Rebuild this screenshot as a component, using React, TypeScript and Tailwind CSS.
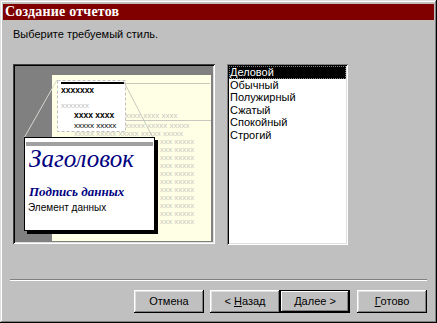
const sans = "font-['Liberation_Sans',Arial,sans-serif]";
const serif = "font-['Liberation_Serif','Times_New_Roman',serif]";

const styles = ["Деловой", "Обычный", "Полужирный", "Сжатый", "Спокойный", "Строгий"];

function Btn({ children, isDefault }: { children: React.ReactNode; isDefault?: boolean }) {
  return (
    <button
      className={
        "h-[23px] w-[70px] bg-[#c0c0c0] text-[11px] text-black flex items-center justify-center " +
        (isDefault
          ? "shadow-[inset_0_0_0_1px_#000,inset_-2px_-2px_#000,inset_2px_2px_#fff,inset_-3px_-3px_#808080]"
          : "shadow-[inset_-1px_-1px_#000,inset_1px_1px_#fff,inset_-2px_-2px_#808080,inset_2px_2px_#dfdfdf]")
      }
    >
      {children}
    </button>
  );
}

function PreviewDrawing() {
  // coordinates relative to the inner preview area; the card covers x 9..143, y 71..168
  const rows = [];
  for (let i = 0; i < 12; i++) {
    const y = 70 + i * 8;
    const covered = i > 0;
    rows.push(
      <text
        key={i}
        x={covered ? 145 : 59}
        y={y}
        fontSize="8"
        fill="#c8c8c0"
        fontFamily="Liberation Sans, Arial"
      >
        {covered ? "xxx xxxxx" : "xxxxx xxxxx xxxxx xxxxx xxxxx"}
      </text>
    );
  }
  return (
    <svg width="198" height="176" className="absolute left-0 top-0">
      <rect x="0" y="0" width="198" height="176" fill="#808080" />
      <rect x="37" y="9" width="159" height="166" fill="#ffffe6" />
      <line x1="110" y1="17.5" x2="195" y2="17.5" stroke="#c8c8c0" />
      <line x1="59" y1="54.5" x2="196" y2="54.5" stroke="#c8c8c0" />
      <text x="110" y="52" fontSize="8" fill="#c8c8c0" fontFamily="Liberation Sans, Arial">
        xxxx xxxx xxxx
      </text>
      <text x="110" y="62" fontSize="8" fill="#c8c8c0" fontFamily="Liberation Sans, Arial">
        xxxxx xxxxx xxxxx
      </text>
      {rows}
      <rect x="42.5" y="14.5" width="68" height="51" fill="#fff" stroke="#c0c0c0" strokeDasharray="3 2" />
      <rect x="46" y="16" width="63" height="2" fill="#000" />
      <text x="46" y="27" fontSize="8.5" fontWeight="bold" fill="#000" fontFamily="Liberation Sans, Arial">
        xxxxxxx
      </text>
      <text x="46" y="42" fontSize="8" fill="#c0c0c0" fontFamily="Liberation Sans, Arial">
        xxxxxxx
      </text>
      <text x="59" y="52" fontSize="8.5" fontWeight="bold" fill="#000" fontFamily="Liberation Sans, Arial">
        xxxx xxxx
      </text>
      <text x="59" y="62" fontSize="8" fill="#000" fontFamily="Liberation Sans, Arial">
        xxxxx xxxxx
      </text>
      <line x1="42" y1="14" x2="9" y2="72" stroke="#d8d8d0" />
      <line x1="108" y1="14" x2="139" y2="74" stroke="#c8c8c0" />
    </svg>
  );
}

export default function App() {
  return (
    <div
      className={
        "w-[437px] h-[323px] bg-[#c0c0c0] p-[3px] flex flex-col shadow-[inset_-1px_-1px_#000,inset_1px_1px_#dfdfdf,inset_-2px_-2px_#808080,inset_2px_2px_#fff] " +
        sans
      }
    >
      {/* Title bar */}
      <div className="mt-[1px] h-[16px] bg-[#800000] flex items-center px-[2px]">
        <span className={"text-white text-[14px] font-bold leading-none tracking-[0.2px] " + serif}>
          Создание отчетов
        </span>
      </div>

      <div className="flex flex-col px-[10px]">
        <p className="mt-[8px] text-[11px] leading-[13px] text-black">Выберите требуемый стиль.</p>

        <div className="mt-[23px] flex gap-[12px]">
          {/* Preview */}
          <div className="relative w-[202px] h-[180px] p-[2px] bg-[#808080] shadow-[inset_1px_1px_#404040,inset_-1px_-1px_#fff,inset_2px_2px_#000,inset_-2px_-2px_#dfdfdf]">
            <div className="relative w-[198px] h-[176px] overflow-hidden">
              <PreviewDrawing />
              {/* Magnified card */}
              <div className="absolute left-[9px] top-[71px] w-[131px] h-[94px] bg-white border border-black shadow-[3px_3px_0_#000] flex flex-col">
                <div className="mx-[1px] mt-[4px] h-[4px] bg-[#a0a0a0]" />
                <div className={"mt-[1px] pl-[4px] text-[25px] italic leading-[24px] text-[#000080] " + serif}>
                  Заголовок
                </div>
                <div className={"mt-[14px] pl-[4px] text-[13px] italic font-bold leading-[14px] text-[#000080] " + serif}>
                  Подпись данных
                </div>
                <div className="mt-[3px] pl-[3px] text-[10px] leading-[12px] text-black">Элемент данных</div>
              </div>
            </div>
          </div>

          {/* Style list */}
          <div className="w-[121px] h-[181px] bg-white p-[2px] shadow-[inset_1px_1px_#808080,inset_-1px_-1px_#fff,inset_2px_2px_#000,inset_-2px_-2px_#dfdfdf]">
            <ul className="flex flex-col">
              {styles.map((s, i) => (
                <li
                  key={s}
                  className={
                    "h-[12.6px] pl-[1px] text-[11px] leading-[12.6px] " +
                    (i === 0 ? "bg-black text-white outline-1 outline-dotted outline-[#808080] -outline-offset-1" : "text-black")
                  }
                >
                  {s}
                </li>
              ))}
            </ul>
          </div>
        </div>
      </div>

      {/* Separator */}
      <div className="mt-[34px] mx-[7px] h-[2px] border-t border-[#808080] border-b border-b-white" />

      {/* Buttons */}
      <div className="mt-[9px] flex justify-end pr-[7px]">
        <Btn>Отмена</Btn>
        <div className="w-[6px]" />
        <Btn>
          &lt;&nbsp;<span className="underline">Н</span>азад
        </Btn>
        <Btn isDefault>
          <span className="underline">Д</span>алее&nbsp;&gt;
        </Btn>
        <div className="w-[7px]" />
        <Btn>
          <span className="underline">Г</span>отово
        </Btn>
      </div>
    </div>
  );
}
